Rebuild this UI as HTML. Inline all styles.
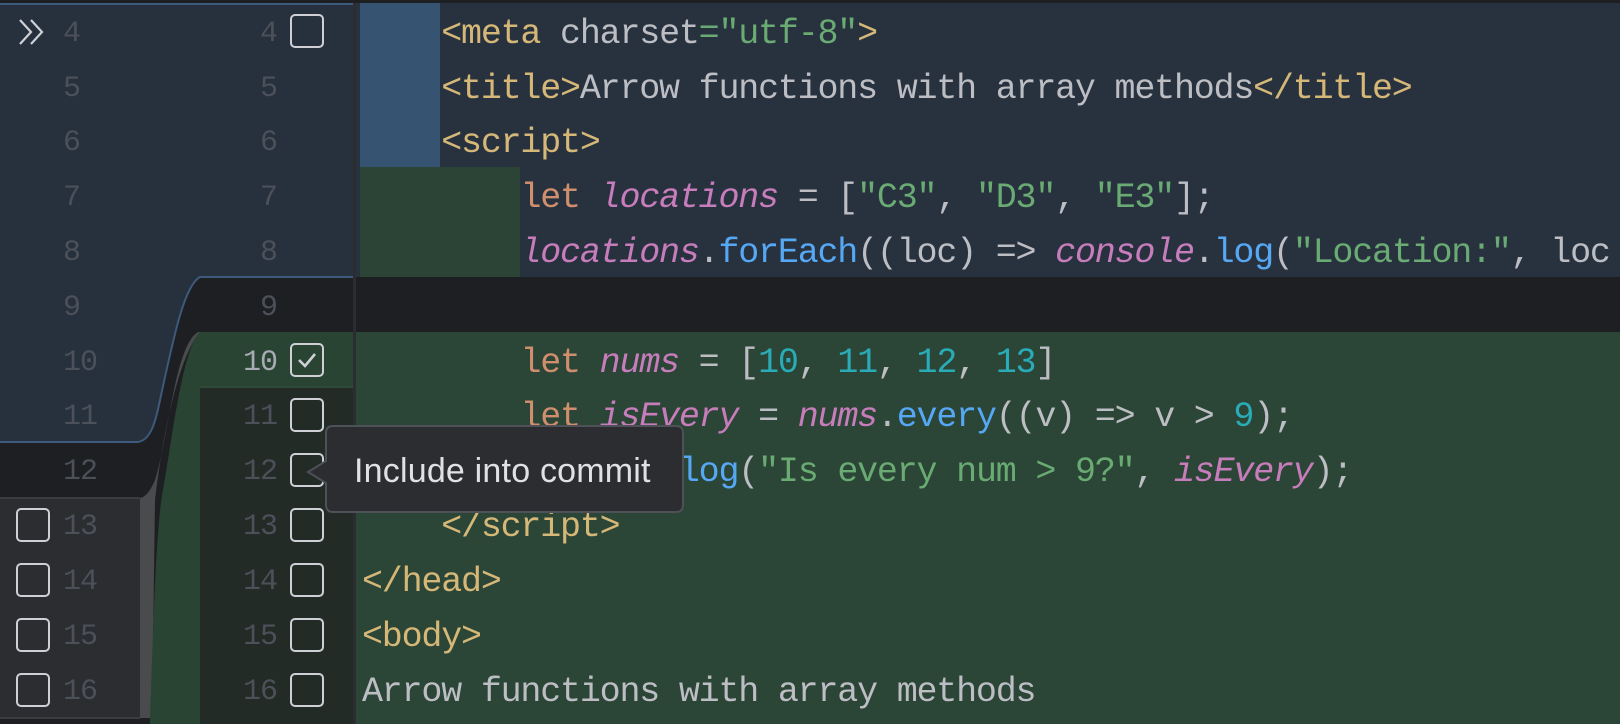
<!DOCTYPE html>
<html><head><meta charset="utf-8">
<style>
html,body{margin:0;padding:0;}
body{width:1620px;height:724px;overflow:hidden;background:#1e1f22;position:relative;font-family:"Liberation Mono",monospace;}
.r{position:absolute;left:354px;right:0;height:55px;}
.c{position:absolute;left:362px;white-space:pre;font-size:35px;letter-spacing:-1.2px;line-height:55px;color:#bcbec4;margin-top:4px;}
.t{color:#d5b778}.s{color:#6aab73}.k{color:#cf8e6d}.v{color:#c77dbb;font-style:italic}.f{color:#56a8f5}.n{color:#2aacb8}
.ln{position:absolute;font-size:30px;letter-spacing:-1px;line-height:55px;color:#4b5059;margin-top:4px;}
.ml{left:200px;width:77px;text-align:right;}
.ll{left:63px;}
.cb{position:absolute;width:30px;height:30px;border:2px solid #ced0d6;border-radius:5px;box-sizing:content-box;}
</style></head><body>
<svg width="354" height="724" style="position:absolute;left:0;top:0">
<rect x="0" y="0" width="354" height="724" fill="#1e1f22"/>
<path d="M0,4 L354,4 L354,277 L200,277 C185,285 175,330 160,400 C155,425 150,440 138,442 L0,442 Z" fill="#27313e"/>
<path d="M354,277 L200,277 C185,285 175,330 160,400 C155,425 150,440 138,442 L0,442" fill="none" stroke="#3d5a7c" stroke-width="2"/>
<line x1="0" y1="4" x2="354" y2="4" stroke="#3d5a7c" stroke-width="2"/>
<path d="M198,332 C175,345 168,440 155,480 C150,492 145,497 140,498 L140,718 L152,718 L155,500 C162,440 177,360 200,332 Z" fill="#4a4b4c"/>
<path d="M200,332 C182,350 172,440 163,490 C157,520 154,600 150,718 L150,724 L354,724 L354,332 Z" fill="#2a4434"/>
<rect x="200" y="387" width="154" height="337" fill="#222b26"/>
<line x1="200" y1="387" x2="354" y2="387" stroke="#2f4a39" stroke-width="2"/>
<rect x="0" y="498" width="140" height="220" fill="#2b2d30"/>
<line x1="0" y1="498" x2="140" y2="498" stroke="#3a3c40" stroke-width="2"/>
<line x1="0" y1="718" x2="140" y2="718" stroke="#3a3c40" stroke-width="2"/>
<path d="M20,20 L31,32 L20,44 M31,20 L42,32 L31,44" fill="none" stroke="#ced0d6" stroke-width="2.2"/>
</svg>
<div style="position:absolute;left:353px;top:0;width:3px;height:724px;background:#2b2d30"></div>

<div class="r" style="top:3px;height:274px;left:356px;background:#28323f"></div>
<div style="position:absolute;left:360px;top:3px;width:80px;height:164px;background:#375372"></div>
<div style="position:absolute;left:360px;top:167px;width:160px;height:110px;background:#2b4435"></div>
<div class="r" style="top:277px;height:55px;left:356px;background:#1e1f22"></div>
<div class="r" style="top:332px;height:392px;left:356px;background:#2b4536"></div>
<div style="position:absolute;left:0;top:0;width:1620px;height:3px;background:#1e1f22"></div>

<div class="c" style="top:3px">    <span class="t">&lt;meta </span>charset<span class="s">="utf-8"</span><span class="t">&gt;</span></div>
<div class="c" style="top:58px">    <span class="t">&lt;title&gt;</span>Arrow functions with array methods<span class="t">&lt;/title&gt;</span></div>
<div class="c" style="top:112px">    <span class="t">&lt;script&gt;</span></div>
<div class="c" style="top:167px">        <span class="k">let </span><span class="v">locations</span> = [<span class="s">"C3"</span>, <span class="s">"D3"</span>, <span class="s">"E3"</span>];</div>
<div class="c" style="top:222px">        <span class="v">locations</span>.<span class="f">forEach</span>((loc) =&gt; <span class="v">console</span>.<span class="f">log</span>(<span class="s">"Location:"</span>, loc</div>
<div class="c" style="top:332px">        <span class="k">let </span><span class="v">nums</span> = [<span class="n">10</span>, <span class="n">11</span>, <span class="n">12</span>, <span class="n">13</span>]</div>
<div class="c" style="top:386px">        <span class="k">let </span><span class="v">isEvery</span> = <span class="v">nums</span>.<span class="f">every</span>((v) =&gt; v &gt; <span class="n">9</span>);</div>
<div class="c" style="top:441px">        <span class="v">console</span>.<span class="f">log</span>(<span class="s">"Is every num &gt; 9?"</span>, <span class="v">isEvery</span>);</div>
<div class="c" style="top:496px">    <span class="t">&lt;/script&gt;</span></div>
<div class="c" style="top:551px"><span class="t">&lt;/head&gt;</span></div>
<div class="c" style="top:606px"><span class="t">&lt;body&gt;</span></div>
<div class="c" style="top:661px">Arrow functions with array methods</div>

<div class="ln ll" style="top:3px">4</div>
<div class="ln ll" style="top:58px">5</div>
<div class="ln ll" style="top:112px">6</div>
<div class="ln ll" style="top:167px">7</div>
<div class="ln ll" style="top:222px">8</div>
<div class="ln ll" style="top:277px">9</div>
<div class="ln ll" style="top:332px">10</div>
<div class="ln ll" style="top:386px">11</div>
<div class="ln ll" style="top:441px">12</div>
<div class="ln ll" style="top:496px">13</div>
<div class="ln ll" style="top:551px">14</div>
<div class="ln ll" style="top:606px">15</div>
<div class="ln ll" style="top:661px">16</div>
<div class="ln ml" style="top:3px">4</div>
<div class="ln ml" style="top:58px">5</div>
<div class="ln ml" style="top:112px">6</div>
<div class="ln ml" style="top:167px">7</div>
<div class="ln ml" style="top:222px">8</div>
<div class="ln ml" style="top:277px">9</div>
<div class="ln ml" style="top:332px;color:#a9abb3">10</div>
<div class="ln ml" style="top:386px">11</div>
<div class="ln ml" style="top:441px">12</div>
<div class="ln ml" style="top:496px">13</div>
<div class="ln ml" style="top:551px">14</div>
<div class="ln ml" style="top:606px">15</div>
<div class="ln ml" style="top:661px">16</div>

<div class="cb" style="left:290px;top:14px"></div>
<div class="cb" style="left:290px;top:343px"></div>
<svg width="34" height="34" style="position:absolute;left:290px;top:343px"><path d="M9,17 L15,23 L25,11" fill="none" stroke="#ced0d6" stroke-width="2.6"/></svg>
<div class="cb" style="left:290px;top:398px"></div>
<div class="cb" style="left:290px;top:453px"></div>
<div class="cb" style="left:290px;top:508px"></div>
<div class="cb" style="left:290px;top:563px"></div>
<div class="cb" style="left:290px;top:618px"></div>
<div class="cb" style="left:290px;top:673px"></div>
<div class="cb" style="left:16px;top:508px"></div>
<div class="cb" style="left:16px;top:563px"></div>
<div class="cb" style="left:16px;top:618px"></div>
<div class="cb" style="left:16px;top:673px"></div>

<svg width="390" height="100" style="position:absolute;left:304px;top:423px">
<path d="M29,3 L372,3 Q379,3 379,10 L379,82 Q379,89 372,89 L29,89 Q22,89 22,82 L22,60 L4,49 L22,38 L22,10 Q22,3 29,3 Z" fill="#2b2d30" stroke="#4e5157" stroke-width="2"/>
</svg>
<div style="position:absolute;left:354px;top:450px;font-family:'Liberation Sans',sans-serif;font-size:34px;letter-spacing:0.2px;line-height:42px;color:#dfe1e5;white-space:nowrap">Include into commit</div>
</body></html>
